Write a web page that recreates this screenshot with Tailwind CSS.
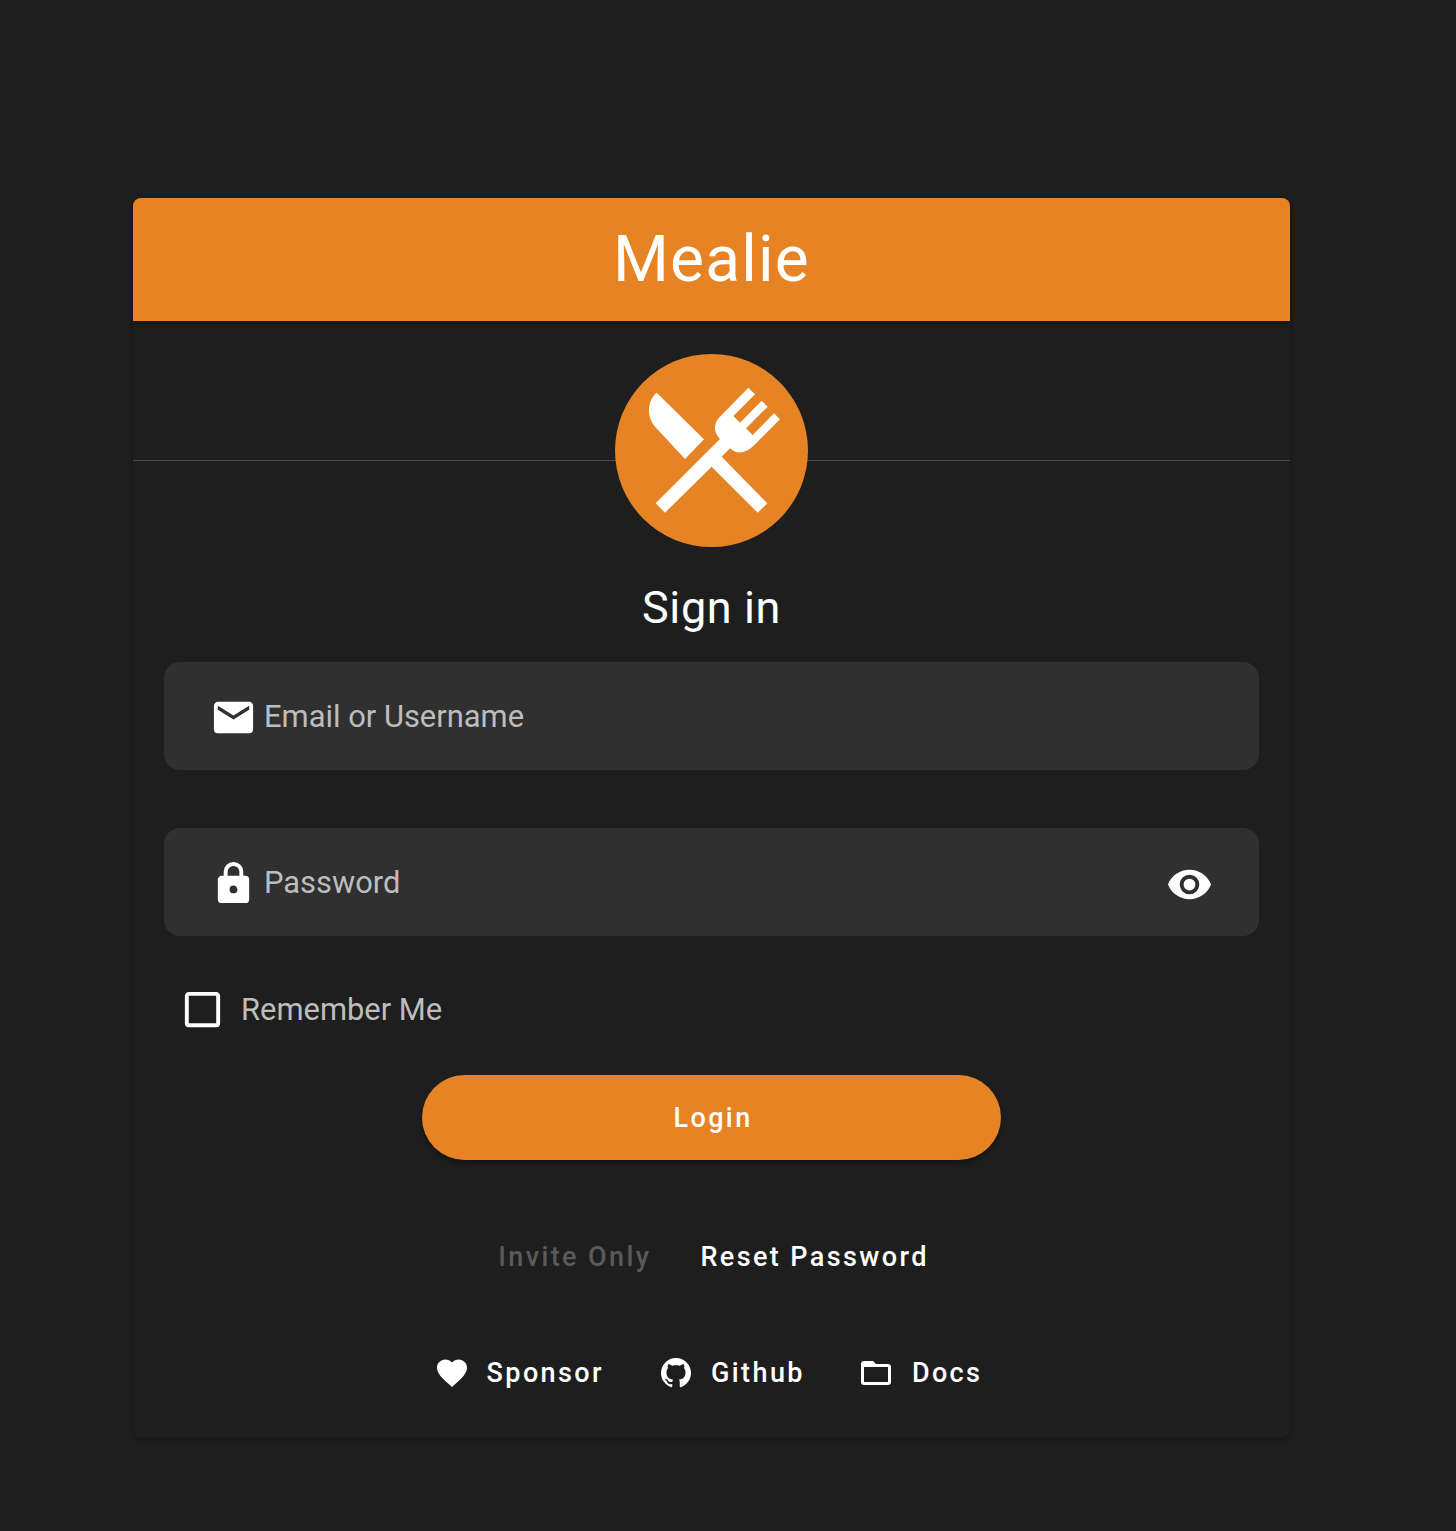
<!DOCTYPE html>
<html>
    <head>
        <title>Mealie Login</title>
        <script src="https://cdn.jsdelivr.net/npm/@tailwindcss/browser@4"></script>
    </head>

    <body class="w-full min-h-screen bg-[#1e1e1e] pt-[198px] pl-[133px] font-['Roboto',sans-serif]">
        <div class="w-[1157px] h-[1240px] flex flex-col rounded-lg bg-[#1e1e1e] shadow-[0_2px_4px_rgba(0,0,0,0.3)]">
            <!-- header -->
            <div class="h-[123px] shrink-0 flex items-center justify-center rounded-t-lg bg-[#e58325] text-white text-[64px] tracking-[1.2px] shadow-[0_2px_4px_rgba(0,0,0,0.3)]">Mealie</div>

            <!-- logo over divider -->
            <div class="relative h-[226px] shrink-0 flex justify-center pt-[33px]">
                <div class="absolute left-0 right-0 top-[139px] h-px bg-[#4a4a4a]"></div>
                <div class="relative w-[193px] h-[193px] rounded-full bg-[#e58325]">
                    <svg viewBox="75 42 579 579" class="w-full h-full fill-white"><path d="M200,158 C185,170 177,190 177,210 C177,232 185,250 198,263 L285,357 L342,298 Z"/><path d="M475,143 L495,163 L430,228 L450,248 L515,182 L533,200 L468,265 L488,285 L552,220 L570,238 L490,318 C468,340 440,345 420,325 L395,350 L532,490 L503,518 L365,380 L225,518 L197,490 L390,297 C370,277 370,250 390,230 Z"/></svg>
                </div>
            </div>

            <div class="h-[115px] shrink-0 flex items-start justify-center text-white text-[45px] tracking-[0.6px] leading-[60px] pt-[31px]">Sign in</div>

            <!-- inputs -->
            <div class="flex flex-col gap-[58px] px-[31px]">
                <div class="h-[108px] flex items-center rounded-2xl bg-[#303030] pl-[46px]">
                    <svg viewBox="0 0 24 24" class="w-[47px] h-[47px] fill-white mt-[3px]"><path d="M20,8L12,13L4,8V6L12,11L20,6M20,4H4C2.89,4 2,4.89 2,6V18A2,2 0 0,0 4,20H20A2,2 0 0,0 22,18V6C22,4.89 21.1,4 20,4Z"/></svg>
                    <span class="ml-[7px] pt-[2px] text-[30.9px] text-[#bdbdbd]">Email or Username</span>
                </div>
                <div class="h-[108px] flex items-center rounded-2xl bg-[#303030] pl-[46px] pr-[46px]">
                    <svg viewBox="0 0 24 24" class="w-[47px] h-[47px] fill-white mt-[3px]"><path d="M12,17A2,2 0 0,0 14,15C14,13.89 13.1,13 12,13A2,2 0 0,0 10,15A2,2 0 0,0 12,17M18,8A2,2 0 0,1 20,10V20A2,2 0 0,1 18,22H6A2,2 0 0,1 4,20V10C4,8.89 4.9,8 6,8H7V6A5,5 0 0,1 12,1A5,5 0 0,1 17,6V8H18M12,3A3,3 0 0,0 9,6V8H15V6A3,3 0 0,0 12,3Z"/></svg>
                    <span class="ml-[7px] pt-[2px] text-[30.9px] text-[#bdbdbd]">Password</span>
                    <svg viewBox="0 0 24 24" class="ml-auto w-[47px] h-[47px] fill-white mt-[4px]"><path d="M12,9A3,3 0 0,0 9,12A3,3 0 0,0 12,15A3,3 0 0,0 15,12A3,3 0 0,0 12,9M12,17A5,5 0 0,1 7,12A5,5 0 0,1 12,7A5,5 0 0,1 17,12A5,5 0 0,1 12,17M12,4.5C7,4.5 2.73,7.61 1,12C2.73,16.39 7,19.5 12,19.5C17,19.5 21.27,16.39 23,12C21.27,7.61 17,4.5 12,4.5Z"/></svg>
                </div>
            </div>

            <!-- remember me -->
            <div class="flex items-center h-12 mt-[49px] pl-[46px]">
                <svg viewBox="0 0 24 24" class="w-[47px] h-[47px] fill-white"><path d="M19,3H5C3.89,3 3,3.89 3,5V19A2,2 0 0,0 5,21H19A2,2 0 0,0 21,19V5C21,3.89 20.1,3 19,3M19,5V19H5V5H19Z"/></svg>
                <span class="ml-[15px] pt-[2px] text-[30.9px] text-[#bdbdbd]">Remember Me</span>
            </div>

            <button type="button" class="mt-[42px] mx-auto w-[579px] h-[85px] shrink-0 pl-[3px] pt-[2px] rounded-full bg-[#e58325] text-white text-[27px] font-medium tracking-[2.4px] shadow-[0_3px_4px_rgba(0,0,0,0.35)]">Login</button>

            <!-- links -->
            <div class="flex justify-center gap-[49px] mt-[77px] pl-[4px] text-[27px] font-medium tracking-[2.4px] leading-[40px]">
                <span class="text-[#5a5a5a]">Invite Only</span>
                <span class="text-white">Reset Password</span>
            </div>

            <div class="flex justify-center items-center mt-[76px] pr-[7px] text-[27px] font-medium tracking-[2.4px] leading-[40px] text-white">
                <a class="flex items-center gap-[17px]">
                    <svg viewBox="0 0 24 24" class="w-9 h-9 fill-white"><path d="M12,21.35L10.55,20.03C5.4,15.36 2,12.27 2,8.5C2,5.41 4.42,3 7.5,3C9.24,3 10.91,3.81 12,5.08C13.09,3.81 14.76,3 16.5,3C19.58,3 22,5.41 22,8.5C22,12.27 18.6,15.36 13.45,20.03L12,21.35Z"/></svg>
                    Sponsor
                </a>
                <a class="flex items-center gap-[17px] ml-[54px]">
                    <svg viewBox="0 0 24 24" class="w-9 h-9 fill-white"><path d="M12,2A10,10 0 0,0 2,12C2,16.42 4.87,20.17 8.84,21.5C9.34,21.58 9.5,21.27 9.5,21C9.5,20.77 9.5,20.14 9.5,19.31C6.73,19.91 6.14,17.97 6.14,17.97C5.68,16.81 5.03,16.5 5.03,16.5C4.12,15.88 5.1,15.9 5.1,15.9C6.1,15.97 6.63,16.93 6.63,16.93C7.5,18.45 8.97,18 9.54,17.76C9.63,17.11 9.89,16.67 10.17,16.42C7.95,16.17 5.62,15.31 5.62,11.5C5.62,10.39 6,9.5 6.65,8.79C6.55,8.54 6.2,7.5 6.75,6.15C6.75,6.15 7.59,5.88 9.5,7.17C10.29,6.95 11.15,6.84 12,6.84C12.85,6.84 13.71,6.95 14.5,7.17C16.41,5.88 17.25,6.15 17.25,6.15C17.8,7.5 17.45,8.54 17.35,8.79C18,9.5 18.38,10.39 18.38,11.5C18.38,15.32 16.04,16.16 13.81,16.41C14.17,16.72 14.5,17.33 14.5,18.26C14.5,19.6 14.5,20.68 14.5,21C14.5,21.27 14.66,21.59 15.17,21.5C19.14,20.16 22,16.42 22,12A10,10 0 0,0 12,2Z"/></svg>
                    Github
                </a>
                <a class="flex items-center gap-[18px] ml-[53px]">
                    <svg viewBox="0 0 24 24" class="w-9 h-9 fill-white"><path d="M20,18H4V8H20M20,6H12L10,4H4C2.89,4 2,4.89 2,6V18A2,2 0 0,0 4,20H20A2,2 0 0,0 22,18V8C22,6.89 21.1,6 20,6Z"/></svg>
                    Docs
                </a>
            </div>
        </div>
    </body>
</html>
